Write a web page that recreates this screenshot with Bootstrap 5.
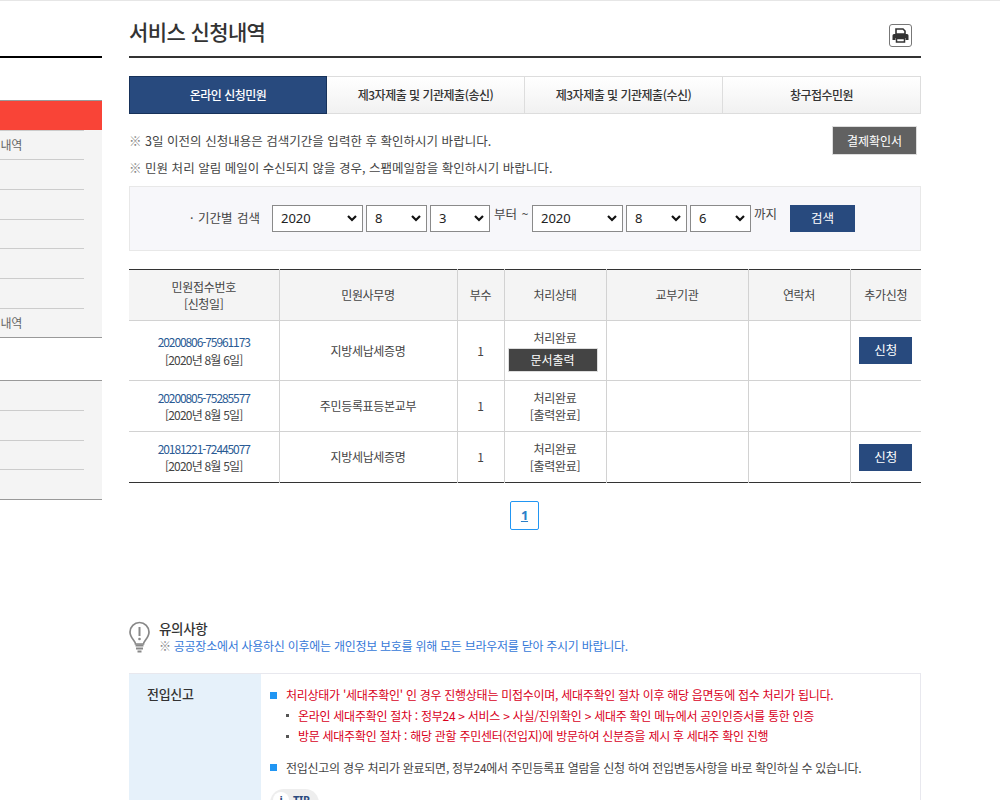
<!DOCTYPE html>
<html lang="ko">
<head>
<meta charset="utf-8">
<title>서비스 신청내역</title>
<link href="https://cdn.jsdelivr.net/npm/bootstrap@5.3.0/dist/css/bootstrap.min.css" rel="stylesheet">
<style>
html,body{height:800px;overflow:hidden}
body{font-family:"Noto Sans CJK KR","Liberation Sans",sans-serif;font-size:12px;color:#333;letter-spacing:-.3px;border-top:1px solid #e6e6e6;background:#fff}
.shell{gap:27px;align-items:flex-start}
.side{width:102px;flex:none;overflow:hidden;padding-top:55px}
.side-inner{width:200px;margin-left:-98px}
.side-top{border-top:2px solid #000;height:44px}
.side-head{height:29.5px;background:#f94437;border-top:1px solid #999}
.side-list{background:#f4f4f4;border-bottom:1px solid #999;padding:0 18px 0 0;list-style:none;margin:0}
.side-list li{height:29.7px;border-top:1px solid #ccc;color:#666;font-size:12px;padding-left:77px;line-height:27px;white-space:nowrap}
.side-gap{height:42px}
.side-list2{border-top:1px solid #999}
.side-list2 li{border-top:0;border-bottom:1px solid #ccc;height:29.6px}
.side-list2 li:last-child{border-bottom:0;height:29px}
.main{width:792px;flex:none}
.title-row{height:57px;border-bottom:2px solid #333}
.page-title{font-size:21px;font-weight:500;color:#333;margin:0;padding-top:15px;letter-spacing:-.6px;line-height:30px}
.print-btn{width:23px;height:23px;border:1px solid #777;border-radius:3px;background:#fff;padding:0;margin-top:23px;margin-right:9px;line-height:1}
.tabs{margin-top:18px;height:38px}
.tab-item{flex:0 0 198px;border:1px solid #ddd;border-left-width:0;background:linear-gradient(#fff,#f1f1f1);font-size:12px;font-weight:500;color:#333;text-align:center;line-height:36px;letter-spacing:-.5px}
.tab-item.on{background:#284a7e;border:1px solid #17325a;color:#fff}
.notes{margin-top:12px;height:60px;padding-top:1px;position:relative}
.notes p{margin:0;font-size:12.5px;line-height:27px;color:#444;letter-spacing:.02px}
.mk{color:#888}
.confirm-btn{position:absolute;right:4px;top:0;width:85px;height:29px;background:#616161;border:1px solid #ddd;color:#fff;font-size:12px;padding:0;border-radius:0}
.search-box{height:65px;background:#f7f7fa;border:1px solid #e8e8e8;padding-top:18px;padding-left:60px;color:#444;font-size:12.5px;letter-spacing:0;gap:3px}
.search-box label{width:79px;flex:none;white-space:nowrap;word-spacing:1px}
.sel{appearance:none;height:27px;border:1px solid #8a8a8a;border-radius:0;background:#fff url("data:image/svg+xml,%3Csvg xmlns='http://www.w3.org/2000/svg' width='10' height='7'%3E%3Cpath d='M1 1l4 4 4-4' fill='none' stroke='%23111' stroke-width='2.2'/%3E%3C/svg%3E") no-repeat right 5px center;padding:0 0 0 8px;font-size:13px;color:#222;font-family:"Noto Sans","Liberation Sans",sans-serif;letter-spacing:0}
.s-y{width:91px}.s-m{width:61px}.s-d{width:60px}.s-d2{width:61px}
.from-txt{width:36px;flex:none;padding-left:1px;white-space:nowrap;word-spacing:1px}
.to-txt{width:24px;flex:none;white-space:nowrap}
.search-btn{width:65px;height:27px;background:#284a7e;color:#fff;border:0;border-radius:0;padding:0;font-size:12.5px;margin-left:9px}
.list-table{margin-top:18px;width:792px;table-layout:fixed;border-collapse:collapse;border-top:1px solid #333;border-bottom:1px solid #333;margin-bottom:0;font-size:12px;color:#444}
.list-table th,.list-table td{border:1px solid #d2d2d2;text-align:center;vertical-align:middle;padding:0;line-height:17.5px;font-weight:400;color:#444;background:#fff}
.list-table th{background:#f4f4f4;height:51px}
.list-table tr:first-child th{border-top:0}
.list-table tr:last-child td{border-bottom:0}
.list-table th:first-child,.list-table td:first-child{border-left:0}
.list-table th:last-child,.list-table td:last-child{border-right:0}
.r1 td{height:60px}.r2 td{height:51px}
.rcpt{color:#2a5a94;text-decoration:none;letter-spacing:-1.1px}
.date{letter-spacing:-.8px}
.print-doc{display:block;width:90px;height:24px;margin:2px auto 0 3px;background:#444;border:1px solid #ddd;color:#fff;font-size:12px;line-height:22px;padding:0;border-radius:0}
.apply{width:53px;height:27px;background:#284a7e;color:#fff;border:0;border-radius:0;padding:0;font-size:12.5px}
.pager-row{margin-top:18px;height:28px;padding-right:1px}
.pager-row a{display:block;width:29px;height:29px;border:1px solid #2196f3;border-radius:2px;color:#2a7fc8;font-weight:700;font-size:13px;line-height:27px;text-align:center;font-family:"Noto Sans",sans-serif}
.notice-head{margin-top:91px;gap:9px;height:34px}
.notice-head svg{margin-top:1px;flex:none}
.notice-head h2{font-size:13.5px;font-weight:500;margin:0;line-height:17px;color:#333}
.notice-head p{font-size:12px;margin:0;line-height:17px;color:#3578d8;letter-spacing:-.27px}
.notice-box{margin-top:19px;height:200px;border:1px solid #e8e8ee;border-left:0}
.notice-side{width:132px;flex:none;background:#e6f1fa;padding:10px 0 0 18px;font-size:13px;font-weight:500;color:#333}
.notice-body{padding:11px 0 0 9px;color:#444;font-size:12px}
.line{line-height:20.500px;letter-spacing:-.28px;white-space:nowrap}
.red{color:#d9001b}
.bl{width:7px;height:7px;background:#2196f3;flex:none;margin-right:9px}
.dot{width:3px;height:3px;background:#555;flex:none;margin:0 9px 0 16px}
.next-line{margin-top:11px}
.tip-pill{margin-top:11px;width:49px;height:30px;border-radius:14px;background:#eee;padding:3px 0 0 3px;font-size:11px;font-weight:700;color:#2a4a7e;gap:4px;line-height:16px;font-family:"Noto Sans",sans-serif}
.tip-i{width:16px;height:16px;border-radius:50%;background:#fff;text-align:center;flex:none}
</style>
</head>
<body>
<div class="d-flex shell">
  <nav class="side">
    <div class="side-inner">
      <div class="side-top"></div>
      <div class="side-head"></div>
      <ul class="side-list">
        <li>신청내역</li><li></li><li></li><li></li><li></li><li></li><li>신청내역</li>
      </ul>
      <div class="side-gap"></div>
      <ul class="side-list side-list2">
        <li></li><li></li><li></li><li></li>
      </ul>
    </div>
  </nav>
  <main class="main">
    <div class="d-flex justify-content-between title-row">
      <h1 class="page-title">서비스 신청내역</h1>
      <button class="print-btn" type="button" aria-label="인쇄">
        <svg width="17" height="15" viewBox="0 0 17 15"><path d="M4 1h7l2 2v3H4z" fill="#fff" stroke="#333" stroke-width="1.6"/><path d="M2 6h13a1.500 1.500 0 0 1 1.500 1.500V12H13.500v-2h-10v2H.5V7.500A1.500 1.500 0 0 1 2 6z" fill="#333"/><path d="M4.500 10.500h8v3.500h-8z" fill="#fff" stroke="#333" stroke-width="1.500"/></svg>
      </button>
    </div>
    <div class="d-flex tabs">
      <div class="tab-item on">온라인 신청민원</div>
      <div class="tab-item">제3자제출 및 기관제출(송신)</div>
      <div class="tab-item">제3자제출 및 기관제출(수신)</div>
      <div class="tab-item">창구접수민원</div>
    </div>
    <div class="notes">
      <p><span class="mk">※</span> 3일 이전의 신청내용은 검색기간을 입력한 후 확인하시기 바랍니다.</p>
      <p><span class="mk">※</span> 민원 처리 알림 메일이 수신되지 않을 경우, 스팸메일함을 확인하시기 바랍니다.</p>
      <button class="btn confirm-btn" type="button">결제확인서</button>
    </div>
    <div class="search-box d-flex align-items-start">
      <label class="pt-1">· 기간별 검색</label>
      <select class="sel s-y"><option>2020</option></select>
      <select class="sel s-m"><option>8</option></select>
      <select class="sel s-d"><option>3</option></select>
      <span class="from-txt">부터 ~</span>
      <select class="sel s-y"><option>2020</option></select>
      <select class="sel s-m"><option>8</option></select>
      <select class="sel s-d2"><option>6</option></select>
      <span class="to-txt">까지</span>
      <button class="btn search-btn" type="button">검색</button>
    </div>
    <table class="table list-table">
      <colgroup><col style="width:150px"><col style="width:178px"><col style="width:47px"><col style="width:102px"><col style="width:142px"><col style="width:102px"><col style="width:71px"></colgroup>
      <thead><tr><th>민원접수번호<br>[신청일]</th><th>민원사무명</th><th>부수</th><th>처리상태</th><th>교부기관</th><th>연락처</th><th>추가신청</th></tr></thead>
      <tbody>
        <tr class="r1"><td><a class="rcpt" href="#">20200806-75961173</a><br><span class="date">[2020년 8월 6일]</span></td><td>지방세납세증명</td><td>1</td><td>처리완료<button class="btn print-doc" type="button">문서출력</button></td><td></td><td></td><td><button class="btn apply" type="button">신청</button></td></tr>
        <tr class="r2"><td><a class="rcpt" href="#">20200805-75285577</a><br><span class="date">[2020년 8월 5일]</span></td><td>주민등록표등본교부</td><td>1</td><td>처리완료<br>[출력완료]</td><td></td><td></td><td></td></tr>
        <tr class="r2"><td><a class="rcpt" href="#">20181221-72445077</a><br><span class="date">[2020년 8월 5일]</span></td><td>지방세납세증명</td><td>1</td><td>처리완료<br>[출력완료]</td><td></td><td></td><td><button class="btn apply" type="button">신청</button></td></tr>
      </tbody>
    </table>
    <div class="pager-row d-flex justify-content-center"><a href="#">1</a></div>
    <div class="notice-head d-flex">
      <svg width="21" height="32" viewBox="0 0 21 32"><path d="M6.500 23c0-3-5.500-6-5.500-12a9.500 9.500 0 0 1 19 0c0 6-5.500 9-5.500 12z" fill="#fff" stroke="#888" stroke-width="1.700"/><path d="M10.500 6v9" stroke="#888" stroke-width="2"/><circle cx="10.500" cy="18" r="1.300" fill="#888"/><path d="M6.500 24.500h8M7 27.500h7M8.500 30.500h4" stroke="#888" stroke-width="2"/></svg>
      <div><h2>유의사항</h2><p><span class="mk">※</span> 공공장소에서 사용하신 이후에는 개인정보 보호를 위해 모든 브라우저를 닫아 주시기 바랍니다.</p></div>
    </div>
    <div class="notice-box d-flex">
      <div class="notice-side">전입신고</div>
      <div class="notice-body">
        <div class="line red d-flex align-items-center"><span class="bl"></span>처리상태가 '세대주확인' 인 경우 진행상태는 미접수이며, 세대주확인 절차 이후 해당 읍면동에 접수 처리가 됩니다.</div>
        <div class="line red d-flex align-items-center"><span class="dot"></span>온라인 세대주확인 절차 : 정부24 &gt; 서비스 &gt; 사실/진위확인 &gt; 세대주 확인 메뉴에서 공인인증서를 통한 인증</div>
        <div class="line red d-flex align-items-center"><span class="dot"></span>방문 세대주확인 절차 : 해당 관할 주민센터(전입지)에 방문하여 신분증을 제시 후 세대주 확인 진행</div>
        <div class="line d-flex align-items-center next-line"><span class="bl"></span>전입신고의 경우 처리가 완료되면, 정부24에서 주민등록표 열람을 신청 하여 전입변동사항을 바로 확인하실 수 있습니다.</div>
        <div class="tip-pill d-flex"><span class="tip-i">i</span><span>TIP</span></div>
      </div>
    </div>
  </main>
</div>
<script src="https://cdn.jsdelivr.net/npm/bootstrap@5.3.0/dist/js/bootstrap.bundle.min.js"></script>
</body>
</html>
